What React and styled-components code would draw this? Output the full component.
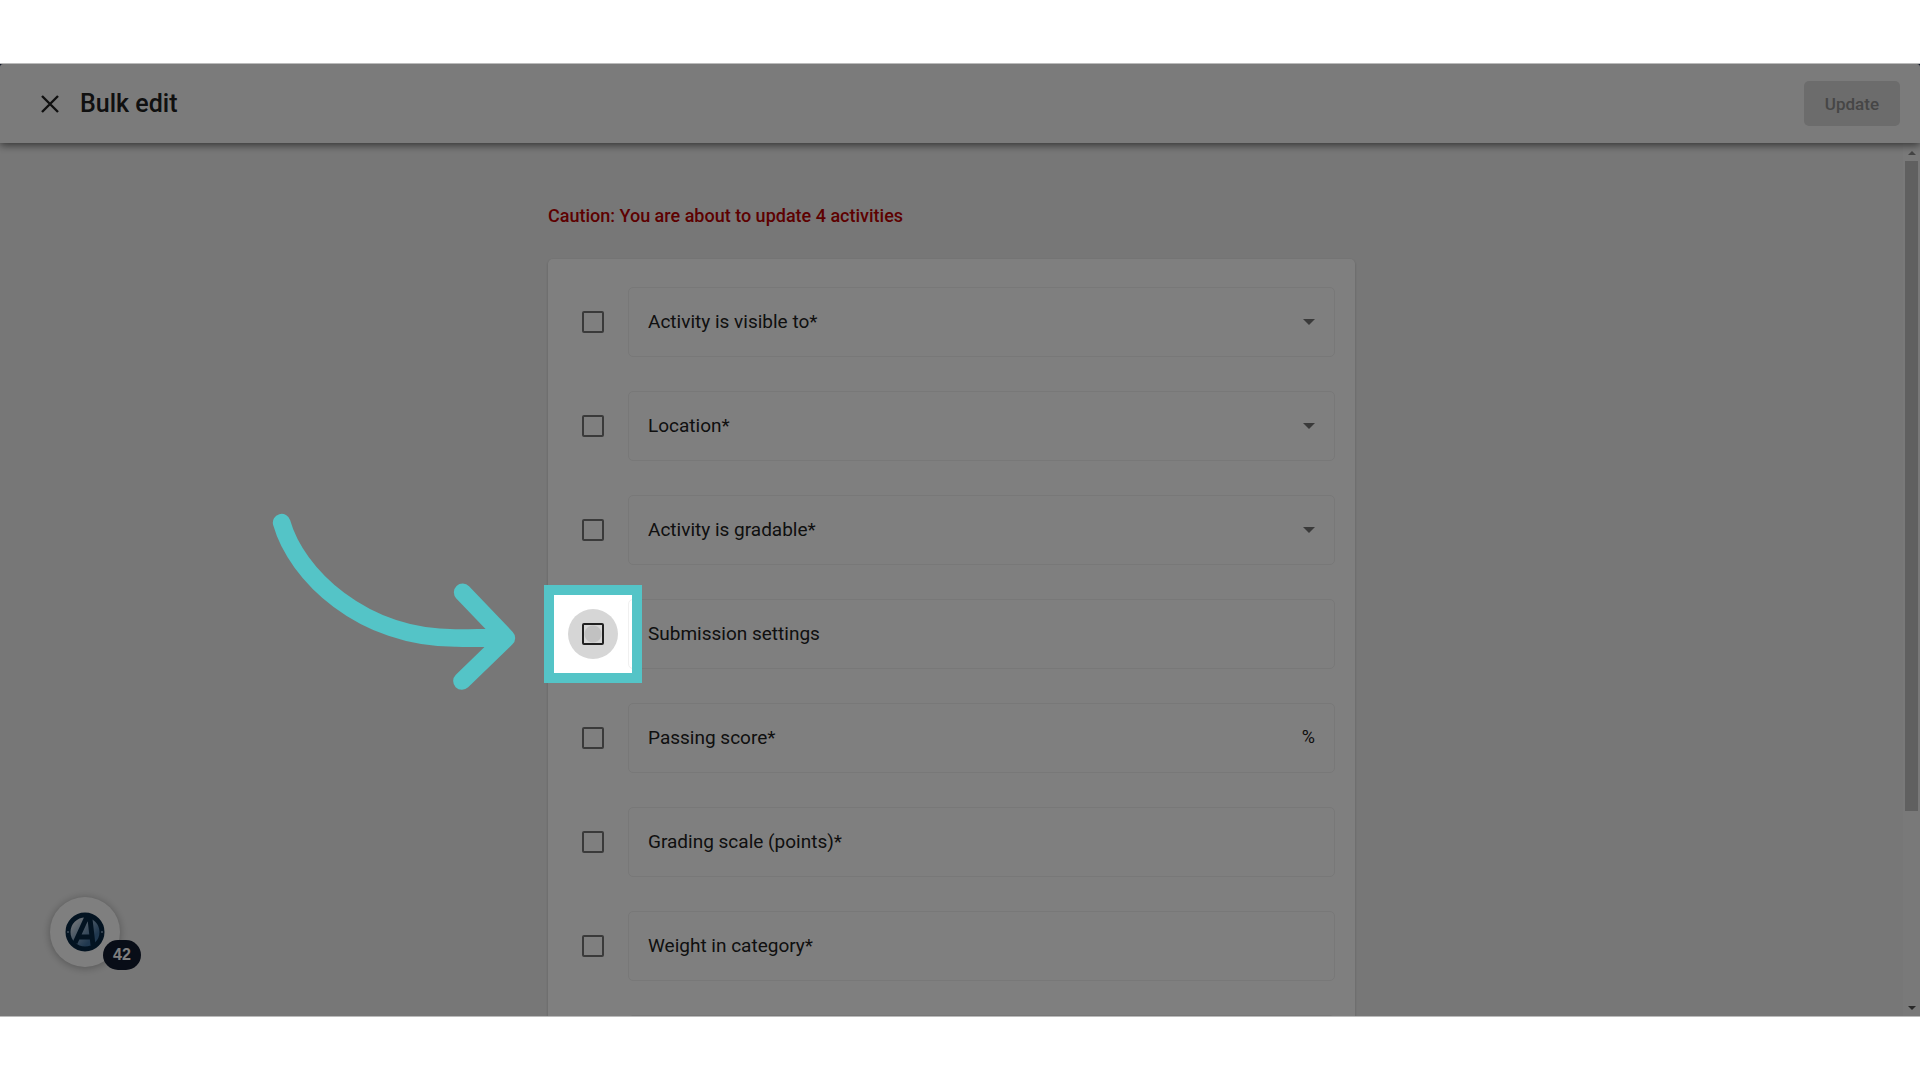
import React from "react";
import styled, { createGlobalStyle } from "styled-components";

const GlobalStyle = createGlobalStyle`
  * {
    box-sizing: border-box;
  }

  body {
    margin: 0;
    background: #fff;
    font-family: Roboto, "Liberation Sans", sans-serif;
    color: #212121;
  }
`;

const Page = styled.div`
  display: flex;
  flex-direction: column;
  height: 100vh;
  padding: 63px 0;
`;

const Stage = styled.div`
  position: relative;
  flex: 1;
  min-height: 0;
  display: flex;
  flex-direction: column;
  overflow: hidden;
  background: #10204a;
  border: solid #bbb;
  border-width: 1px 0;
`;

const Header = styled.header`
  position: relative;
  z-index: 1;
  display: flex;
  align-items: center;
  flex: 0 0 79px;
  padding: 0 20px 0 36px;
  background: #f7f7f7;
  border-radius: 3px 3px 0 0;
  box-shadow: 0 2px 8px rgba(0, 0, 0, 0.6);
`;

const CloseButton = styled.button`
  display: flex;
  padding: 0;
  border: 0;
  background: none;
  color: #212121;
`;

const Title = styled.h1`
  flex: 1;
  margin: 0 0 0 16px;
  font-size: 25px;
  font-weight: 500;
  line-height: 32px;
`;

const UpdateButton = styled.button`
  height: 45px;
  padding: 0 21px;
  border: 0;
  border-radius: 5px;
  background: #d8d8d8;
  color: #8c8c8c;
  font-family: inherit;
  font-size: 17px;
  font-weight: 500;
`;

const Body = styled.div`
  flex: 1;
  min-height: 0;
  display: flex;
  background: #efefef;
`;

const Content = styled.main`
  flex: 1;
  height: 0;
  padding: 61px 20px 0;
`;

const Form = styled.form`
  max-width: 807px;
  margin: 0 auto;
`;

const Caution = styled.p`
  margin: 0 0 31px;
  color: #bb0000;
  font-size: 18px;
  font-weight: 500;
  line-height: 24px;
`;

const Card = styled.div`
  display: flex;
  flex-direction: column;
  gap: 34px;
  padding: 28px 20px 28px 34px;
  border-radius: 5px;
  background: #fff;
  box-shadow: 0 1px 3px rgba(0, 0, 0, 0.2);
`;

const Row = styled.div`
  display: flex;
  align-items: center;
  gap: 24px;
`;

const CheckCell = styled.div`
  position: relative;
  display: flex;
  flex: 0 0 22px;
`;

const Checkbox = styled.input`
  appearance: none;
  position: relative;
  width: 22px;
  height: 22px;
  margin: 0;
  border: 2px solid ${(props) => (props.$active ? "#212121" : "#757575")};
  border-radius: 2px;
`;

const Ripple = styled.span`
  position: absolute;
  inset: -14px;
  border-radius: 50%;
  background: radial-gradient(circle, #c1c1c1 0 8px, #d6d6d6 9px);
`;

// The huge shadow dims everything around the highlighted control
const Spotlight = styled.span`
  position: absolute;
  z-index: 10;
  inset: -38px;
  border: 10px solid #54c4c7;
  box-shadow: 0 0 0 3000px rgba(0, 0, 0, 0.5);
  pointer-events: none;
`;

const Arrow = styled.svg`
  position: absolute;
  z-index: 11;
  right: 64px;
  top: -133px;
  width: 290px;
  height: 220px;
  pointer-events: none;
`;

const Field = styled.div`
  flex: 1;
  display: flex;
  align-items: center;
  height: 70px;
  padding: 0 19px;
  border: 1px solid #f0f0f0;
  border-radius: 5px;
`;

const Input = styled.input`
  flex: 1;
  min-width: 0;
  padding: 0;
  border: 0;
  outline: 0;
  background: none;
  color: #212121;
  font-family: inherit;
  font-size: 19px;
  line-height: 24px;

  &::placeholder {
    color: #212121;
    opacity: 1;
  }
`;

const Select = styled(Input)`
  appearance: none;
`;

const Caret = styled.span`
  border: 6px solid transparent;
  border-top-color: #757575;
  border-bottom: 0;
`;

const Suffix = styled.span`
  font-size: 18px;
  line-height: 24px;
  padding-bottom: 2px;
`;

const Scrollbar = styled.div`
  flex: 0 0 17px;
  display: flex;
  flex-direction: column;
  align-items: center;
  gap: 6px;
  padding: 8px 0 6px;
  background: #f3f3f3;
`;

const ScrollArrow = styled.span`
  border: 4px solid transparent;
  ${(props) =>
    props.$up
      ? "border-bottom-color: #8a8a8a; border-top: 0;"
      : "border-top-color: #505050; border-bottom: 0;"}
`;

const Track = styled.div`
  flex: 1;
  align-self: stretch;
  padding: 0 2px;
`;

const Thumb = styled.div`
  height: 77.5%;
  background: #c1c1c1;
`;

const Widget = styled.button`
  position: absolute;
  z-index: 2;
  left: 50px;
  bottom: 49px;
  display: flex;
  align-items: center;
  justify-content: center;
  width: 70px;
  height: 70px;
  padding: 0;
  border: 0;
  border-radius: 50%;
  background: #fff;
  box-shadow: 0 1px 8px rgba(0, 0, 0, 0.3);
`;

const Count = styled.span`
  position: absolute;
  left: 53px;
  top: 43px;
  width: 38px;
  border-radius: 15px;
  background: #101a2e;
  color: #fff;
  font-size: 16px;
  font-weight: 700;
  line-height: 30px;
  text-align: center;
`;

const FIELDS = [
  { name: "visible", label: "Activity is visible to*", type: "select" },
  { name: "location", label: "Location*", type: "select" },
  { name: "gradable", label: "Activity is gradable*", type: "select" },
  { name: "submission", label: "Submission settings", active: true },
  { name: "passing", label: "Passing score*", suffix: "%" },
  { name: "scale", label: "Grading scale (points)*" },
  { name: "weight", label: "Weight in category*" },
  { name: "extra", label: "" },
];

const CloseIcon = () => (
  <svg width="28" height="28" viewBox="0 0 28 28" aria-hidden="true">
    <path
      d="M6 6L22 22M22 6L6 22"
      fill="none"
      stroke="currentColor"
      strokeWidth="2.4"
    />
  </svg>
);

const Logo = () => (
  <svg width="40" height="40" viewBox="0 0 40 40" aria-hidden="true">
    <defs>
      <linearGradient id="logo-shade" x1="0" y1="0" x2="1" y2="1">
        <stop offset="0.2" stopColor="#d5dfea" />
        <stop offset="0.7" stopColor="#41719f" />
      </linearGradient>
    </defs>
    <circle cx="20" cy="20" r="17" fill="url(#logo-shade)" />
    <circle cx="20" cy="20" r="17" fill="none" stroke="#062743" strokeWidth="5" />
    <path
      d="M10 31L21 7H25L28 33M14 25H27"
      fill="none"
      stroke="#062743"
      strokeWidth="5"
    />
    <circle cx="3" cy="20" r="1" fill="#7f9bb5" />
    <circle cx="37" cy="20" r="1" fill="#7f9bb5" />
  </svg>
);

const GuideArrow = () => (
  <Arrow viewBox="0 0 870 660" aria-hidden="true">
    <path
      d="M95 98C138 252 335 446 620 444Q690 446 765 440M638 307L769 444L636 573"
      fill="none"
      stroke="#54c4c7"
      strokeWidth="53"
      strokeLinecap="round"
      strokeLinejoin="round"
    />
  </Arrow>
);

const FieldRow = ({ name, label, type, suffix, active }) => (
  <Row>
    <CheckCell>
      {active && <Ripple />}
      <Checkbox
        type="checkbox"
        name={`${name}-enabled`}
        aria-label={`Edit ${label}`}
        $active={active}
      />
      {active && <Spotlight />}
      {active && <GuideArrow />}
    </CheckCell>
    <Field>
      {type === "select" ? (
        <Select as="select" name={name} aria-label={label}>
          <option>{label}</option>
        </Select>
      ) : (
        <Input type="text" name={name} aria-label={label} placeholder={label} />
      )}
      {type === "select" && <Caret />}
      {suffix && <Suffix>{suffix}</Suffix>}
    </Field>
  </Row>
);

class App extends React.Component {
  render() {
    return (
      <Page>
        <GlobalStyle />
        <Stage>
          <Header>
            <CloseButton type="button" aria-label="Close">
              <CloseIcon />
            </CloseButton>
            <Title>Bulk edit</Title>
            <UpdateButton type="button" disabled>
              Update
            </UpdateButton>
          </Header>
          <Body>
            <Content>
              <Form>
                <Caution>Caution: You are about to update 4 activities</Caution>
                <Card>
                  {FIELDS.map((field) => (
                    <FieldRow key={field.name} {...field} />
                  ))}
                </Card>
              </Form>
            </Content>
            <Scrollbar>
              <ScrollArrow $up />
              <Track>
                <Thumb />
              </Track>
              <ScrollArrow />
            </Scrollbar>
          </Body>
          <Widget type="button" aria-label="Open resource center">
            <Logo />
            <Count>42</Count>
          </Widget>
        </Stage>
      </Page>
    );
  }
}

export default App;
